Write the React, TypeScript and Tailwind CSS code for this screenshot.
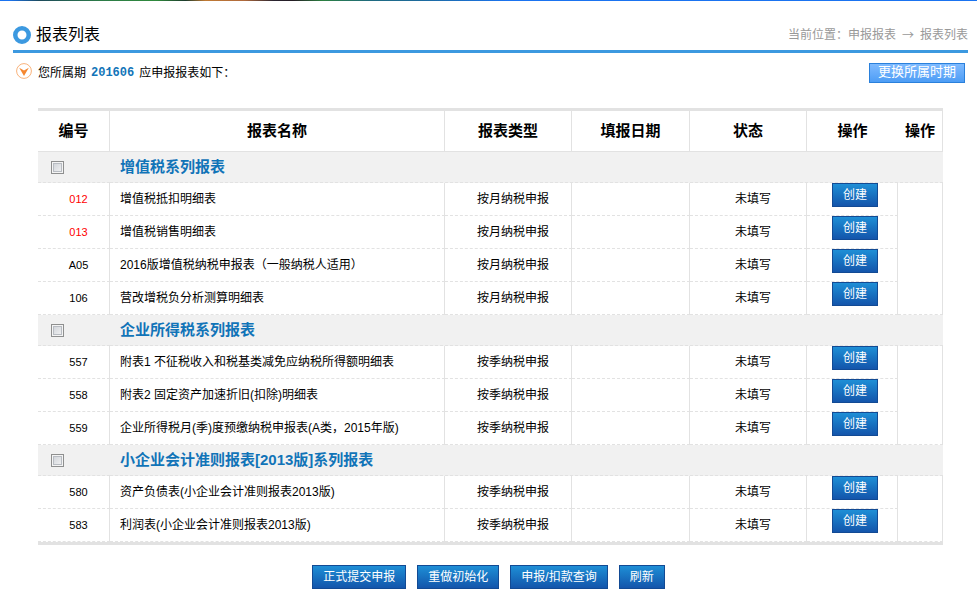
import { useState, type ReactNode } from 'react'
import clsx from 'clsx'

type Report = {
  code: string
  name: string
  highlighted?: boolean
}

type ReportGroup = {
  id: string
  title: string
  cycle: string
  reports: Report[]
}

const reportGroups: ReportGroup[] = [
  {
    id: 'vat',
    title: '增值税系列报表',
    cycle: '按月纳税申报',
    reports: [
      { code: '012', name: '增值税抵扣明细表', highlighted: true },
      { code: '013', name: '增值税销售明细表', highlighted: true },
      { code: 'A05', name: '2016版增值税纳税申报表（一般纳税人适用）' },
      { code: '106', name: '营改增税负分析测算明细表' },
    ],
  },
  {
    id: 'income',
    title: '企业所得税系列报表',
    cycle: '按季纳税申报',
    reports: [
      { code: '557', name: '附表1 不征税收入和税基类减免应纳税所得额明细表' },
      { code: '558', name: '附表2 固定资产加速折旧(扣除)明细表' },
      { code: '559', name: '企业所得税月(季)度预缴纳税申报表(A类，2015年版)' },
    ],
  },
  {
    id: 'accounting',
    title: '小企业会计准则报表[2013版]系列报表',
    cycle: '按季纳税申报',
    reports: [
      { code: '580', name: '资产负债表(小企业会计准则报表2013版)' },
      { code: '583', name: '利润表(小企业会计准则报表2013版)' },
    ],
  },
]

const headers = ['编号', '报表名称', '报表类型', '填报日期', '状态', '操作', '操作']

const footerActions = ['正式提交申报', '重做初始化', '申报/扣款查询', '刷新']

function ActionButton({ children }: { children: ReactNode }) {
  return (
    <button
      type="button"
      className="block h-6 cursor-pointer border border-[#124a94] bg-linear-to-b from-[#1f8fd6] to-[#1455ab] px-2.5 text-xs leading-[22px] whitespace-nowrap text-white hover:to-[#1b66c6]"
    >
      {children}
    </button>
  )
}

function PageHeader() {
  return (
    <header className="flex h-[33px] items-center justify-between border-b-[3px] border-[#3c99e0]">
      <h1 className="flex items-center gap-[5px] text-base leading-6">
        <svg className="size-[18px]" viewBox="0 0 18 18" aria-hidden="true">
          <circle cx="9" cy="9" r="6.75" fill="#fff" stroke="#3c99e0" strokeWidth="4.5" />
        </svg>
        报表列表
      </h1>
      <nav className="flex text-xs leading-6 text-[#999]" aria-label="当前位置">
        <span>当前位置：</span>
        <span>申报报表</span>
        <span className="w-6 text-center font-['Noto_Sans_CJK_SC',sans-serif]">→</span>
        <span>报表列表</span>
      </nav>
    </header>
  )
}

function PeriodBar() {
  return (
    <div className="flex items-start justify-between px-[3px] pt-[10px]">
      <p className="flex items-start text-xs leading-5">
        <svg className="mr-[6px] size-4" viewBox="0 0 16 16" aria-hidden="true">
          <circle cx="8" cy="8" r="7.4" fill="#fff" stroke="#f9b27a" />
          <path d="M3.2 4.8 8 7.4l4.8-2.6L8 13z" fill="#f5872f" />
        </svg>
        您所属期
        <strong className="mx-[5px] font-['Liberation_Mono','Noto_Sans_CJK_SC',monospace] text-[#1174b8]">
          201606
        </strong>
        应申报报表如下：
      </p>
      <button
        type="button"
        className="h-5 cursor-pointer border border-[#2a80db] bg-linear-to-b from-[#7ebaff] to-[#4d9df5] px-2 pb-[3px] text-[13px] leading-[15px] text-white"
      >
        更换所属时期
      </button>
    </div>
  )
}

type GroupRowsProps = {
  group: ReportGroup
  checked: boolean
  onToggle: () => void
}

function GroupRows({ group, checked, onToggle }: GroupRowsProps) {
  const cell = 'border-r border-b border-[#e2e2e2] [border-bottom-style:dashed] p-0 pl-2.5'

  return (
    <tbody>
      <tr className="h-[31px] bg-[#f1f1f1]">
        <td className="border-b border-dashed border-[#e2e2e2] p-0 pl-[13px]">
          <input
            id={group.id}
            type="checkbox"
            checked={checked}
            onChange={onToggle}
            className="block size-[13px] appearance-none border border-[#8e8f8f] bg-linear-to-br from-[#cbcfd5] to-[#f6f6f6] shadow-[inset_0_0_0_1px_#f4f4f4,inset_0_0_0_2px_#b8bcc2] checked:from-[#1174b8] checked:to-[#1174b8]"
          />
        </td>
        <td colSpan={6} className="border-b border-dashed border-[#e2e2e2] p-0 pl-2.5">
          <label htmlFor={group.id} className="text-[15px] leading-5 font-bold text-[#1174b8]">
            {group.title}
          </label>
        </td>
      </tr>
      {group.reports.map((report, index) => (
        <tr key={report.code} className="h-[33px]">
          <td className={clsx(cell, 'text-center text-[11px]', report.highlighted && 'text-[#f00]')}>
            {report.code}
          </td>
          <td className={cell}>{report.name}</td>
          <td className={clsx(cell, 'text-center')}>{group.cycle}</td>
          <td className={cell} />
          <td className={clsx(cell, 'text-center')}>未填写</td>
          <td className="border-r border-b border-[#e2e2e2] [border-bottom-style:dashed] p-0 pl-1.5 align-top">
            <div className="flex justify-center">
              <ActionButton>创建</ActionButton>
            </div>
          </td>
          {index === 0 ? <td rowSpan={group.reports.length} className={cell} /> : null}
        </tr>
      ))}
    </tbody>
  )
}

export default function App() {
  const [selected, setSelected] = useState<string[]>([])

  const toggle = (id: string) => {
    setSelected((current) =>
      current.includes(id) ? current.filter((item) => item !== id) : [...current, id],
    )
  }

  return (
    <div className="min-h-screen bg-white font-['Liberation_Sans','Noto_Sans_CJK_SC',sans-serif] text-xs text-black">
      {/* lower edge of the site banner */}
      <div className="h-px bg-[linear-gradient(90deg,#1a73f0_1%,#1d4a5c_4%,#2c7a48_10%,#2f8a3c_16%,#1c3a2c_19%,#c07a34_21%,#b06a3c_25%,#2a2430_28%,#241c24_30%,#2c8040_33%,#1f6a80_38%,#1d6a9c_43%,#1a73f0_52%)]" />
      <div className="pt-[19px] pr-[9px] pl-[13px]">
        <PageHeader />
        <PeriodBar />
        <main className="px-[25px] pt-[25px]">
          <table className="w-full table-fixed border-separate border-spacing-0 border-y-[3px] border-[#e2e2e2] leading-5">
            <colgroup>
              <col className="w-[72px]" />
              <col />
              <col className="w-[127px]" />
              <col className="w-[118px]" />
              <col className="w-[117px]" />
              <col className="w-[91px]" />
              <col className="w-[45px]" />
            </colgroup>
            <thead>
              <tr className="h-[41px]">
                {headers.map((header, index) => (
                  <th
                    key={index}
                    className={clsx(
                      'border-b border-[#e2e2e2] p-0 text-[15px] font-bold',
                      index !== 5 && 'border-r',
                    )}
                  >
                    {header}
                  </th>
                ))}
              </tr>
            </thead>
            {reportGroups.map((group) => (
              <GroupRows
                key={group.id}
                group={group}
                checked={selected.includes(group.id)}
                onToggle={() => toggle(group.id)}
              />
            ))}
          </table>
        </main>
      </div>
      <footer className="flex justify-center gap-[11px] pt-5 pb-[22px]">
        {footerActions.map((action) => (
          <ActionButton key={action}>{action}</ActionButton>
        ))}
      </footer>
    </div>
  )
}
